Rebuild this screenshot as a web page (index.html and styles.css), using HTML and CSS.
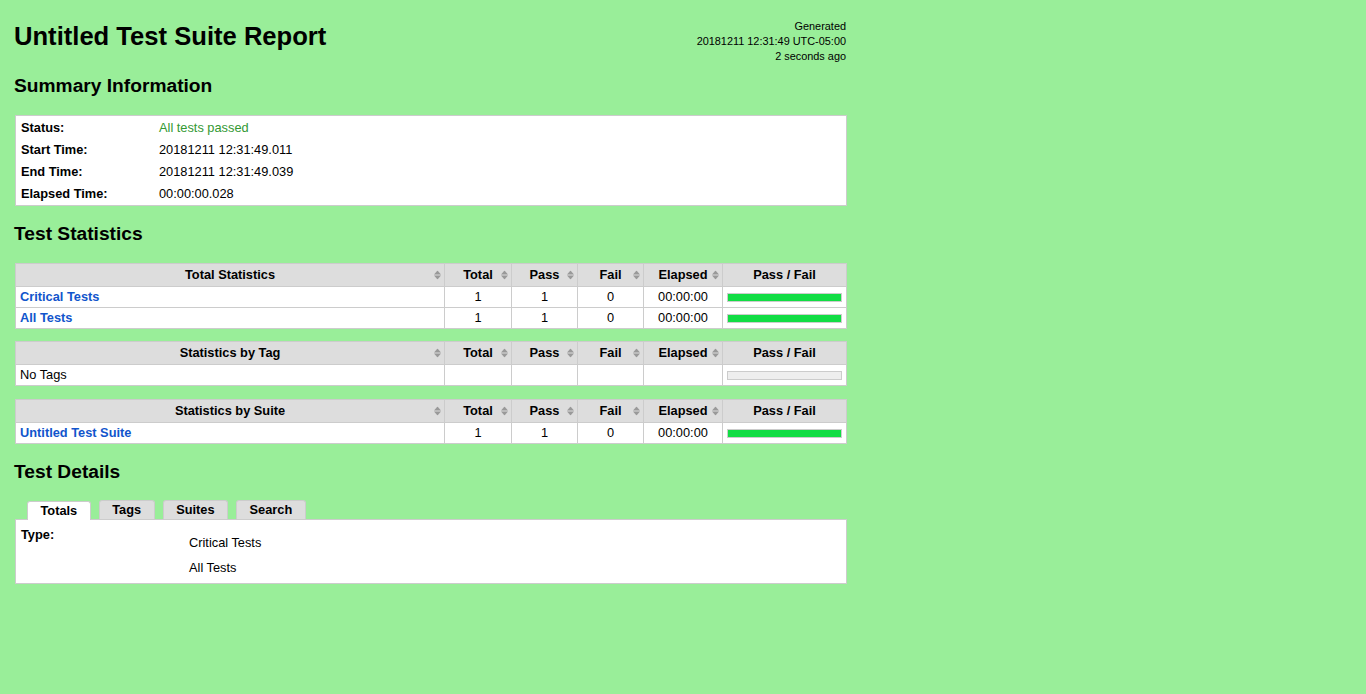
FILE: index.html
```html
<!DOCTYPE html>
<html lang="en">
<head>
<meta charset="utf-8">
<title>Untitled Test Suite Report</title>
<link rel="stylesheet" href="styles.css">
</head>
<body>
<div class="page">
  <header class="header">
    <h1>Untitled Test Suite Report</h1>
    <div class="generated">Generated<br>20181211 12:31:49 UTC-05:00<br>2 seconds ago</div>
  </header>

  <h2>Summary Information</h2>
  <div class="details">
    <div class="label">Status:</div><div class="value pass">All tests passed</div>
    <div class="label">Start Time:</div><div class="value">20181211 12:31:49.011</div>
    <div class="label">End Time:</div><div class="value">20181211 12:31:49.039</div>
    <div class="label">Elapsed Time:</div><div class="value">00:00:00.028</div>
  </div>

  <h2>Test Statistics</h2>
  <div class="stats">
    <div class="th sortable">Total Statistics<svg class="sort" width="7" height="9" viewBox="0 0 7 9"><polygon points="0,4 3.5,0 7,4"/><polygon points="0,5 7,5 3.5,9"/></svg></div>
    <div class="th sortable">Total<svg class="sort" width="7" height="9" viewBox="0 0 7 9"><polygon points="0,4 3.5,0 7,4"/><polygon points="0,5 7,5 3.5,9"/></svg></div>
    <div class="th sortable">Pass<svg class="sort" width="7" height="9" viewBox="0 0 7 9"><polygon points="0,4 3.5,0 7,4"/><polygon points="0,5 7,5 3.5,9"/></svg></div>
    <div class="th sortable">Fail<svg class="sort" width="7" height="9" viewBox="0 0 7 9"><polygon points="0,4 3.5,0 7,4"/><polygon points="0,5 7,5 3.5,9"/></svg></div>
    <div class="th sortable">Elapsed<svg class="sort" width="7" height="9" viewBox="0 0 7 9"><polygon points="0,4 3.5,0 7,4"/><polygon points="0,5 7,5 3.5,9"/></svg></div>
    <div class="th">Pass / Fail</div>

    <div class="td name"><a href="#">Critical Tests</a></div>
    <div class="td num">1</div>
    <div class="td num">1</div>
    <div class="td num">0</div>
    <div class="td num">00:00:00</div>
    <div class="td graph-cell"><div class="graph"></div></div>

    <div class="td name"><a href="#">All Tests</a></div>
    <div class="td num">1</div>
    <div class="td num">1</div>
    <div class="td num">0</div>
    <div class="td num">00:00:00</div>
    <div class="td graph-cell"><div class="graph"></div></div>
  </div>

  <div class="stats tag-stats">
    <div class="th sortable">Statistics by Tag<svg class="sort" width="7" height="9" viewBox="0 0 7 9"><polygon points="0,4 3.5,0 7,4"/><polygon points="0,5 7,5 3.5,9"/></svg></div>
    <div class="th sortable">Total<svg class="sort" width="7" height="9" viewBox="0 0 7 9"><polygon points="0,4 3.5,0 7,4"/><polygon points="0,5 7,5 3.5,9"/></svg></div>
    <div class="th sortable">Pass<svg class="sort" width="7" height="9" viewBox="0 0 7 9"><polygon points="0,4 3.5,0 7,4"/><polygon points="0,5 7,5 3.5,9"/></svg></div>
    <div class="th sortable">Fail<svg class="sort" width="7" height="9" viewBox="0 0 7 9"><polygon points="0,4 3.5,0 7,4"/><polygon points="0,5 7,5 3.5,9"/></svg></div>
    <div class="th sortable">Elapsed<svg class="sort" width="7" height="9" viewBox="0 0 7 9"><polygon points="0,4 3.5,0 7,4"/><polygon points="0,5 7,5 3.5,9"/></svg></div>
    <div class="th">Pass / Fail</div>

    <div class="td name plain">No Tags</div>
    <div class="td num"></div>
    <div class="td num"></div>
    <div class="td num"></div>
    <div class="td num"></div>
    <div class="td graph-cell"><div class="graph empty"></div></div>
  </div>

  <div class="stats">
    <div class="th sortable">Statistics by Suite<svg class="sort" width="7" height="9" viewBox="0 0 7 9"><polygon points="0,4 3.5,0 7,4"/><polygon points="0,5 7,5 3.5,9"/></svg></div>
    <div class="th sortable">Total<svg class="sort" width="7" height="9" viewBox="0 0 7 9"><polygon points="0,4 3.5,0 7,4"/><polygon points="0,5 7,5 3.5,9"/></svg></div>
    <div class="th sortable">Pass<svg class="sort" width="7" height="9" viewBox="0 0 7 9"><polygon points="0,4 3.5,0 7,4"/><polygon points="0,5 7,5 3.5,9"/></svg></div>
    <div class="th sortable">Fail<svg class="sort" width="7" height="9" viewBox="0 0 7 9"><polygon points="0,4 3.5,0 7,4"/><polygon points="0,5 7,5 3.5,9"/></svg></div>
    <div class="th sortable">Elapsed<svg class="sort" width="7" height="9" viewBox="0 0 7 9"><polygon points="0,4 3.5,0 7,4"/><polygon points="0,5 7,5 3.5,9"/></svg></div>
    <div class="th">Pass / Fail</div>

    <div class="td name"><a href="#">Untitled Test Suite</a></div>
    <div class="td num">1</div>
    <div class="td num">1</div>
    <div class="td num">0</div>
    <div class="td num">00:00:00</div>
    <div class="td graph-cell"><div class="graph"></div></div>
  </div>

  <h2 class="details-title">Test Details</h2>
  <ul class="tabs">
    <li class="tab active">Totals</li>
    <li class="tab">Tags</li>
    <li class="tab">Suites</li>
    <li class="tab">Search</li>
  </ul>
  <div class="panel">
    <div class="label">Type:</div>
    <div class="values">
      <div>Critical Tests</div>
      <div>All Tests</div>
    </div>
  </div>
</div>
</body>
</html>
```

FILE: styles.css
```css
* {
  box-sizing: border-box;
}

html {
  background: #99ee99;
}

body {
  margin: 0;
  padding: 19px 14px 20px;
  background: #99ee99;
  color: #000;
  font-family: "Liberation Sans", Arial, Helvetica, sans-serif;
  font-size: 12.8px;
}

.page {
  width: 833px;
}

/* Header */
.header {
  display: flex;
  justify-content: space-between;
  align-items: flex-start;
  width: 832px;
  height: 39px;
}

h1 {
  margin: 2px 0 0;
  font-size: 25.6px;
  line-height: 30px;
  font-weight: bold;
}

.generated {
  font-size: 10.9px;
  line-height: 15px;
  text-align: right;
  white-space: nowrap;
}

h2 {
  margin: 16.5px 0 18.5px;
  font-size: 19.2px;
  line-height: 22px;
  font-weight: bold;
}

h2.details-title {
  margin-top: 16.5px;
  margin-bottom: 17.5px;
}

/* Summary */
.details {
  display: grid;
  grid-template-columns: 138px 1fr;
  width: 832px;
  margin: 0 0 12px 1px;
  padding-top: 1px;
  border: 1px solid #ccc;
  background: #fff;
}

.details .label {
  padding: 0 5px;
  line-height: 22px;
  font-weight: bold;
  white-space: nowrap;
}

.details .value {
  padding: 0 5px;
  line-height: 22px;
}

.pass {
  color: #339933;
}

/* Statistics tables */
.stats {
  display: grid;
  grid-template-columns: 428px 66px 65px 65px 78px 123px;
  gap: 1px;
  width: 832px;
  margin: 0 0 12px 1px;
  padding: 1px;
  background: #ccc;
}

.stats.tag-stats {
  margin-bottom: 13px;
}

.th {
  position: relative;
  padding: 0 4px;
  background: #ddd;
  line-height: 22px;
  font-weight: bold;
  text-align: center;
  white-space: nowrap;
}

.sort {
  position: absolute;
  right: 3px;
  top: 50%;
  transform: translateY(-50%);
  fill: #999;
}

.td {
  padding: 0 4px;
  background: #fff;
  line-height: 20px;
}

.name a {
  color: #1155cc;
  font-weight: bold;
  text-decoration: none;
}

.num {
  text-align: center;
}

.graph-cell {
  display: flex;
  align-items: center;
}

.graph {
  flex: 1;
  height: 9px;
  border: 1px solid #ccc;
  background: #11dd44;
}

.graph.empty {
  background: #eee;
}

/* Tabs */
.tabs {
  display: flex;
  align-items: flex-start;
  gap: 8px;
  height: 19px;
  margin: 0 0 0 13px;
  padding: 0;
  list-style: none;
}

.tab {
  height: 19px;
  padding: 0 12.5px;
  border: 1px solid #ccc;
  border-bottom: 0;
  border-radius: 3px 3px 0 0;
  background: #ddd;
  line-height: 18px;
  font-weight: bold;
}

.tab.active {
  position: relative;
  top: 1px;
  z-index: 1;
  background: #fff;
}

.panel {
  display: grid;
  grid-template-columns: 168px 1fr;
  width: 832px;
  margin-left: 1px;
  padding-bottom: 8px;
  border: 1px solid #ccc;
  background: #fff;
}

.panel .label {
  padding: 7px 5px 0;
  line-height: 15px;
  font-weight: bold;
}

.panel .values {
  display: flex;
  flex-direction: column;
  gap: 10px;
  padding: 15px 5px 0;
  line-height: 15px;
}
```
